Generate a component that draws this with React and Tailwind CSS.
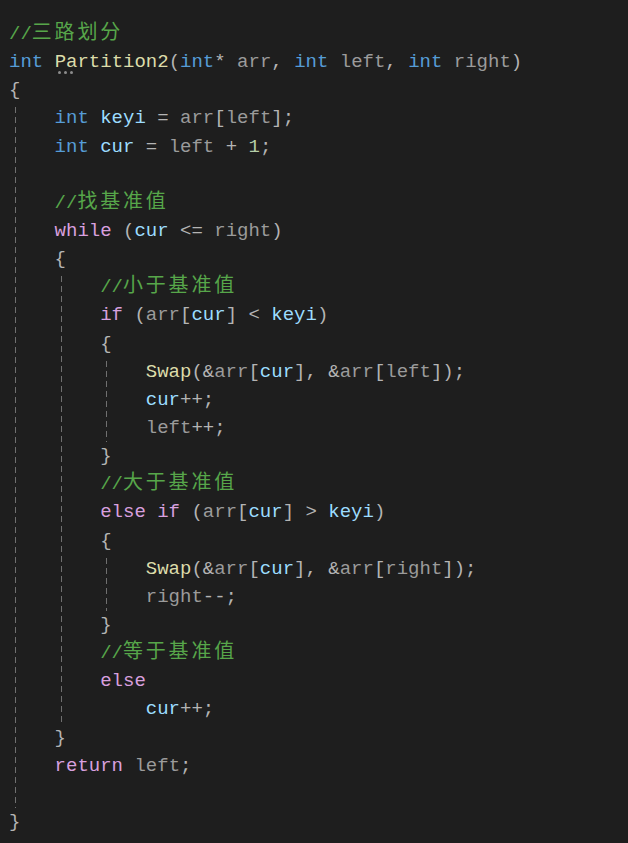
import React from 'react';

// token colours (VS dark theme)
const c = {
  kw: 'text-[#569cd6]',
  ctl: 'text-[#d8a0df]',
  fn: 'text-[#dcdcaa]',
  loc: 'text-[#9cdcfe]',
  par: 'text-[#9b9b9b]',
  pun: 'text-[#b4b4b4]',
  cmt: 'text-[#57a64a]',
  num: 'text-[#b5cea8]',
};

const T = ({ k, children }) => <span className={c[k]}>{children}</span>;

// CJK glyphs take two cells
const Han = ({ children }) => (
  <span className="text-[20px] tracking-[2.8px]">{children}</span>
);

const Line = ({ children }) => (
  <div className="h-[28.15px] leading-[28.15px] whitespace-pre">{children}</div>
);

const Comment = ({ text }) => (
  <Line>
    <T k="cmt">
      //<Han>{text}</Han>
    </T>
  </Line>
);

// inner part of a { } block, with the dashed indent guide
const Block = ({ children }) => (
  <div className="pl-[45.6px] bg-[linear-gradient(#6f6f6f_65%,transparent_65%)] bg-[length:1px_10px] bg-[position:6px_3px] bg-no-repeat bg-repeat-y">
    {children}
  </div>
);

const Open = () => (
  <Line>
    <T k="pun">{'{'}</T>
  </Line>
);
const Close = () => (
  <Line>
    <T k="pun">{'}'}</T>
  </Line>
);

export default function App() {
  return (
    <div className="min-h-screen bg-[#1e1e1e] pt-[20px] pl-[9px] text-[19px] font-['Liberation_Mono','Noto_Sans_CJK_SC',monospace]">
      <Comment text="三路划分" />
      <Line>
        <T k="kw">int</T>{' '}
        <span className="relative">
          <T k="fn">Partition2</T>
          <span className="absolute left-[3px] bottom-[-1px] flex gap-[3px]">
            <span className="w-[3px] h-[3px] rounded-full bg-[#8c8c8c]" />
            <span className="w-[3px] h-[3px] rounded-full bg-[#8c8c8c]" />
            <span className="w-[3px] h-[3px] rounded-full bg-[#8c8c8c]" />
          </span>
        </span>
        <T k="pun">(</T>
        <T k="kw">int</T>
        <T k="pun">*</T> <T k="par">arr</T>
        <T k="pun">,</T> <T k="kw">int</T> <T k="par">left</T>
        <T k="pun">,</T> <T k="kw">int</T> <T k="par">right</T>
        <T k="pun">)</T>
      </Line>
      <Open />
      <Block>
        <Line>
          <T k="kw">int</T> <T k="loc">keyi</T> <T k="pun">=</T> <T k="par">arr</T>
          <T k="pun">[</T>
          <T k="par">left</T>
          <T k="pun">];</T>
        </Line>
        <Line>
          <T k="kw">int</T> <T k="loc">cur</T> <T k="pun">=</T> <T k="par">left</T>{' '}
          <T k="pun">+</T> <T k="num">1</T>
          <T k="pun">;</T>
        </Line>
        <Line> </Line>
        <Comment text="找基准值" />
        <Line>
          <T k="ctl">while</T> <T k="pun">(</T>
          <T k="loc">cur</T> <T k="pun">{'<='}</T> <T k="par">right</T>
          <T k="pun">)</T>
        </Line>
        <Open />
        <Block>
          <Comment text="小于基准值" />
          <Line>
            <T k="ctl">if</T> <T k="pun">(</T>
            <T k="par">arr</T>
            <T k="pun">[</T>
            <T k="loc">cur</T>
            <T k="pun">]</T> <T k="pun">{'<'}</T> <T k="loc">keyi</T>
            <T k="pun">)</T>
          </Line>
          <Open />
          <Block>
            <Line>
              <T k="fn">Swap</T>
              <T k="pun">(&amp;</T>
              <T k="par">arr</T>
              <T k="pun">[</T>
              <T k="loc">cur</T>
              <T k="pun">],</T> <T k="pun">&amp;</T>
              <T k="par">arr</T>
              <T k="pun">[</T>
              <T k="par">left</T>
              <T k="pun">]);</T>
            </Line>
            <Line>
              <T k="loc">cur</T>
              <T k="pun">++;</T>
            </Line>
            <Line>
              <T k="par">left</T>
              <T k="pun">++;</T>
            </Line>
          </Block>
          <Close />
          <Comment text="大于基准值" />
          <Line>
            <T k="ctl">else</T> <T k="ctl">if</T> <T k="pun">(</T>
            <T k="par">arr</T>
            <T k="pun">[</T>
            <T k="loc">cur</T>
            <T k="pun">]</T> <T k="pun">{'>'}</T> <T k="loc">keyi</T>
            <T k="pun">)</T>
          </Line>
          <Open />
          <Block>
            <Line>
              <T k="fn">Swap</T>
              <T k="pun">(&amp;</T>
              <T k="par">arr</T>
              <T k="pun">[</T>
              <T k="loc">cur</T>
              <T k="pun">],</T> <T k="pun">&amp;</T>
              <T k="par">arr</T>
              <T k="pun">[</T>
              <T k="par">right</T>
              <T k="pun">]);</T>
            </Line>
            <Line>
              <T k="par">right</T>
              <T k="pun">--;</T>
            </Line>
          </Block>
          <Close />
          <Comment text="等于基准值" />
          <Line>
            <T k="ctl">else</T>
          </Line>
          <div className="pl-[45.6px]">
            <Line>
              <T k="loc">cur</T>
              <T k="pun">++;</T>
            </Line>
          </div>
        </Block>
        <Close />
        <Line>
          <T k="ctl">return</T> <T k="par">left</T>
          <T k="pun">;</T>
        </Line>
        <Line> </Line>
      </Block>
      <Close />
    </div>
  );
}
